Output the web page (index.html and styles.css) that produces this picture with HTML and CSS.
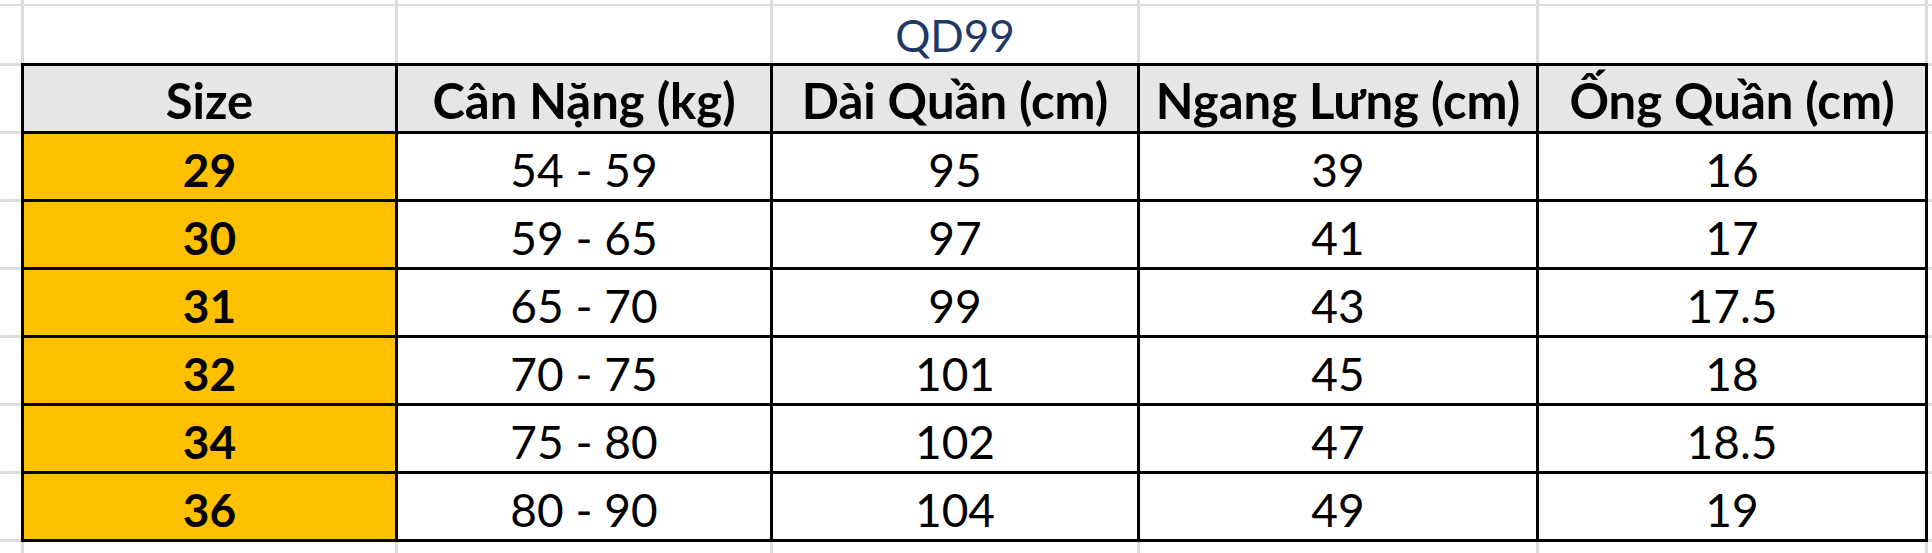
FILE: index.html
```html
<!DOCTYPE html>
<html lang="vi">
<head>
<meta charset="utf-8">
<title>QD99 size chart</title>
<link rel="stylesheet" href="styles.css">
</head>
<body>
<div class="sheet">
  <div class="grid-band top">
    <div class="gc"></div><div class="gc"></div><div class="gc"></div><div class="gc"></div><div class="gc"></div><div class="gc"></div><div class="gc"></div>
    <div class="gc"></div><div class="gc"></div><div class="gc"></div><div class="gc title">QD99</div><div class="gc"></div><div class="gc"></div><div class="gc"></div>
  </div>
  <div class="mid">
    <div class="margin"></div>
    <div class="table">
      <div class="cell head">Size</div>
      <div class="cell head">Cân Nặng (kg)</div>
      <div class="cell head">Dài Quần (cm)</div>
      <div class="cell head">Ngang Lưng (cm)</div>
      <div class="cell head">Ống Quần (cm)</div>

      <div class="cell size">29</div><div class="cell">54 - 59</div><div class="cell">95</div><div class="cell">39</div><div class="cell">16</div>
      <div class="cell size">30</div><div class="cell">59 - 65</div><div class="cell">97</div><div class="cell">41</div><div class="cell">17</div>
      <div class="cell size">31</div><div class="cell">65 - 70</div><div class="cell">99</div><div class="cell">43</div><div class="cell">17.5</div>
      <div class="cell size">32</div><div class="cell">70 - 75</div><div class="cell">101</div><div class="cell">45</div><div class="cell">18</div>
      <div class="cell size">34</div><div class="cell">75 - 80</div><div class="cell">102</div><div class="cell">47</div><div class="cell">18.5</div>
      <div class="cell size">36</div><div class="cell">80 - 90</div><div class="cell">104</div><div class="cell">49</div><div class="cell">19</div>
    </div>
    <div class="margin edge"></div>
  </div>
  <div class="grid-band bottom">
    <div class="gc"></div><div class="gc"></div><div class="gc"></div><div class="gc"></div><div class="gc"></div><div class="gc"></div><div class="gc"></div>
  </div>
</div>
</body>
</html>
```

FILE: styles.css
```css
html, body {
  margin: 0;
  padding: 0;
  background: #ffffff;
}

body {
  font-family: Lato, "Open Sans", "Liberation Sans", sans-serif;
}

.sheet {
  width: 1932px;
  height: 553px;
  overflow: hidden;
  display: flex;
  flex-direction: column;
  background: #ffffff;
}

.grid-band {
  display: grid;
  grid-template-columns: 21px 371px 372px 364px 396px 386px 1fr;
  column-gap: 3px;
  background: #dcdcdc;
}

.grid-band.top {
  grid-template-rows: 4px 57px;
  row-gap: 2px;
  height: 63px;
}

.grid-band.bottom {
  grid-template-rows: 11px;
  height: 11px;
}

.gc {
  background: #ffffff;
}

.title {
  display: flex;
  align-items: center;
  justify-content: center;
  font-size: 44px;
  line-height: 57px;
  color: #1f3864;
  padding-top: 1px;
}

.mid {
  display: flex;
  height: 479px;
}

.margin {
  width: 21px;
  flex: none;
  background: repeating-linear-gradient(to bottom, #dcdcdc 0 3px, #ffffff 3px 68px);
}

.margin.edge {
  width: 4px;
}

.table {
  display: grid;
  grid-template-columns: 371px 372px 364px 396px 386px;
  grid-auto-rows: 65px;
  gap: 3px;
  padding: 3px;
  background: #000000;
}

.cell {
  display: flex;
  align-items: center;
  justify-content: center;
  background: #ffffff;
  color: #000000;
  font-size: 46px;
  line-height: 1;
  padding-top: 6px;
  white-space: nowrap;
}

.head {
  background: #e7e6e6;
  font-weight: 700;
  font-size: 49px;
  padding-top: 4px;
}

.size {
  background: #ffc000;
  font-weight: 700;
}
```
